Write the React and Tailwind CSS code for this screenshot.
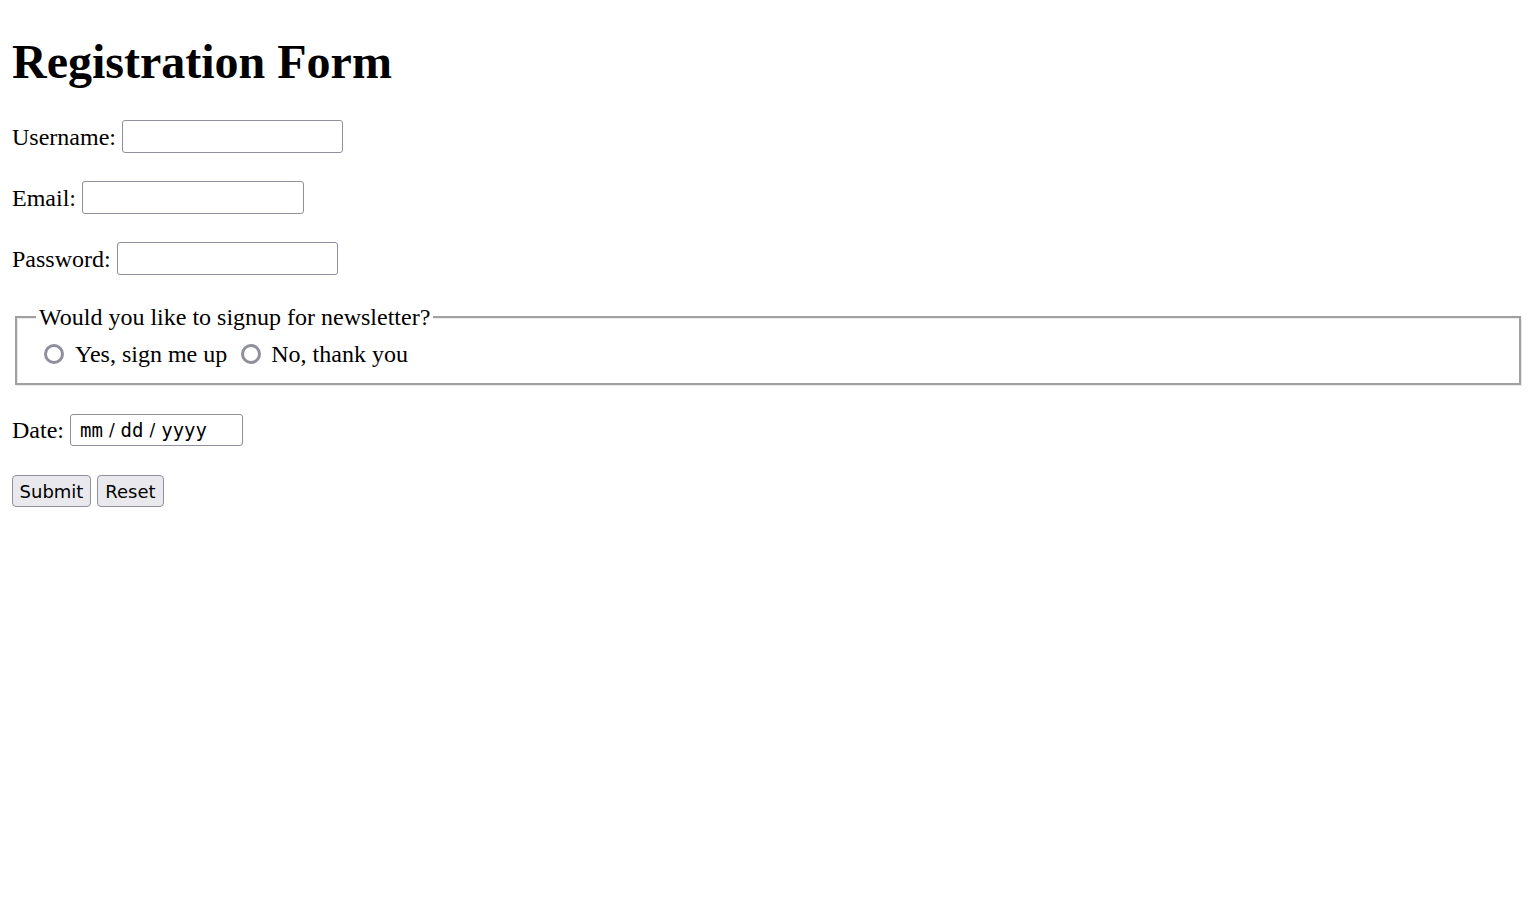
export default function App() {
  return (
    <div className="min-h-screen bg-white px-[12px] pt-[34px] font-['Liberation_Serif',serif] text-[24px] text-black">
      <h1 className="text-[48px] font-bold leading-[55px]">Registration Form</h1>

      <form className="mt-[29px]" onSubmit={(e) => e.preventDefault()}>
        <div className="flex h-[37px] items-center gap-[6px]">
          <label htmlFor="username">Username:</label>
          <input id="username" type="text" className="h-[33px] w-[221px] rounded-[3px] border border-[#8f8f9d] bg-white px-[4px] font-['DejaVu_Sans',sans-serif] text-[18px] outline-none" />
        </div>

        <div className="mt-[24px] flex h-[37px] items-center gap-[6px]">
          <label htmlFor="email">Email:</label>
          <input id="email" type="email" className="h-[33px] w-[222px] rounded-[3px] border border-[#8f8f9d] bg-white px-[4px] font-['DejaVu_Sans',sans-serif] text-[18px] outline-none" />
        </div>

        <div className="mt-[24px] flex h-[37px] items-center gap-[6px]">
          <label htmlFor="password">Password:</label>
          <input id="password" type="password" className="h-[33px] w-[221px] rounded-[3px] border border-[#8f8f9d] bg-white px-[4px] font-['DejaVu_Sans',sans-serif] text-[18px] outline-none" />
        </div>

        {/* groove border faked: dark solid line plus a light inner/outer edge */}
        <fieldset className="mx-[3px] mt-[26px] border-2 border-solid border-[#a0a0a0] px-[19px] pb-[14px] pt-[8px] shadow-[inset_1px_1px_0_#ebebeb,1px_1px_0_#ebebeb]">
          <legend className="bg-white px-[3px] leading-[28px]">Would you like to signup for newsletter?</legend>
          <div className="flex h-[30px] items-center">
            <span className="ml-[8px] h-[20px] w-[20px] rounded-full border-[3px] border-[#8f8f9d] bg-white"></span>
            <span className="ml-[11px]">Yes, sign me up</span>
            <span className="ml-[14px] h-[20px] w-[20px] rounded-full border-[3px] border-[#8f8f9d] bg-white"></span>
            <span className="ml-[10px]">No, thank you</span>
          </div>
        </fieldset>

        <div className="mt-[26px] flex h-[37px] items-center gap-[6px]">
          <label>Date:</label>
          <div className="flex h-[32px] w-[173px] items-center rounded-[3px] border border-[#8f8f9d] bg-white pl-[9px] pt-[2px] font-['DejaVu_Sans_Mono',monospace] text-[19px]">
            <span>mm</span>
            <span className="mx-[6px] font-['DejaVu_Sans',sans-serif] text-[17px]">/</span>
            <span>dd</span>
            <span className="mx-[6px] font-['DejaVu_Sans',sans-serif] text-[17px]">/</span>
            <span>yyyy</span>
          </div>
        </div>

        <div className="mt-[24px] flex h-[37px] items-center gap-[6px] font-['DejaVu_Sans',sans-serif] text-[18px]">
          <button type="submit" className="h-[32px] w-[79px] rounded-[4px] border border-[#8f8f9d] bg-[#e9e9ed] pt-[1px]">Submit</button>
          <button type="reset" className="h-[32px] w-[67px] rounded-[4px] border border-[#8f8f9d] bg-[#e9e9ed] pt-[1px]">Reset</button>
        </div>
      </form>
    </div>
  );
}
